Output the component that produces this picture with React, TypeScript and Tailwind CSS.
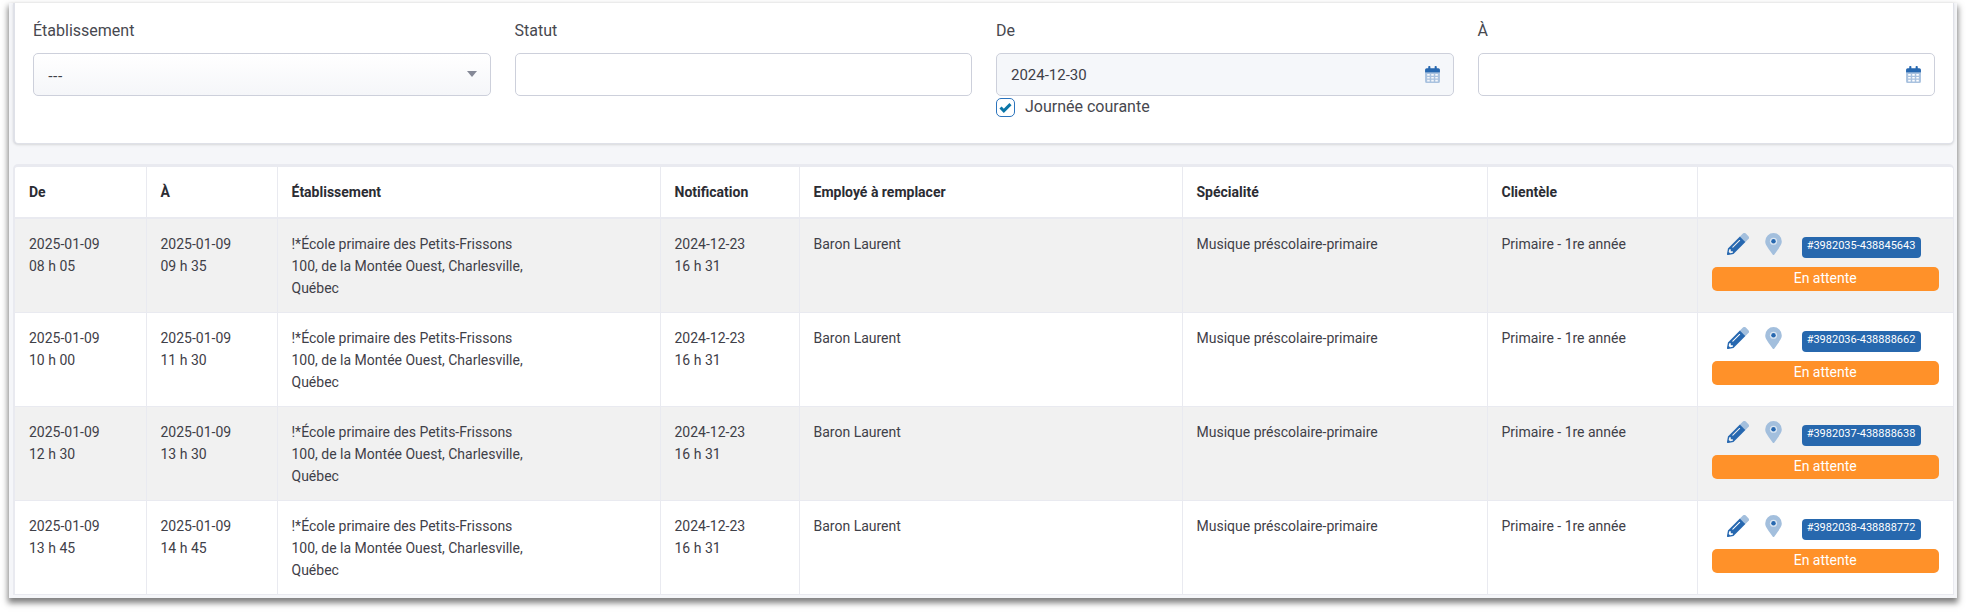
import { useState } from "react";

interface Replacement {
  id: string;
  date: string;
  from: string;
  to: string;
}

const replacements: Replacement[] = [
  { id: "3982035-438845643", date: "2025-01-09", from: "08 h 05", to: "09 h 35" },
  { id: "3982036-438888662", date: "2025-01-09", from: "10 h 00", to: "11 h 30" },
  { id: "3982037-438888638", date: "2025-01-09", from: "12 h 30", to: "13 h 30" },
  { id: "3982038-438888772", date: "2025-01-09", from: "13 h 45", to: "14 h 45" },
];

const columns = [
  { label: "De", width: "w-[131px]" },
  { label: "À", width: "w-[131px]" },
  { label: "Établissement", width: "" },
  { label: "Notification", width: "w-[139px]" },
  { label: "Employé à remplacer", width: "" },
  { label: "Spécialité", width: "w-[305px]" },
  { label: "Clientèle", width: "w-[210px]" },
  { label: "", width: "w-[256px]" },
];

const fieldClass =
  "block h-[43px] w-full rounded-[5px] border border-[#cdd0db] px-[14px] text-[15px] text-[#3f4048] outline-none";

const cellClass = "px-[14px] pt-[14px] pb-[13px]";

const CalendarIcon = () => (
  <svg viewBox="0 0 448 512" className="h-[17px] w-[15px]">
    <path
      fill="#a9c2df"
      fillRule="evenodd"
      d="M0 192h448v272a48 48 0 0 1-48 48H48a48 48 0 0 1-48-48zM64 240v52h76v-52zM186 240v52h76v-52zM308 240v52h76v-52zM64 328v52h76v-52zM186 328v52h76v-52zM308 328v52h76v-52zM64 416v48h76v-48zM186 416v48h76v-48zM308 416v48h76v-48z"
    />
    <path
      fill="#2768b0"
      d="M0 192v-80a48 48 0 0 1 48-48h48V24a24 24 0 0 1 24-24h16a24 24 0 0 1 24 24v40h128V24a24 24 0 0 1 24-24h16a24 24 0 0 1 24 24v40h48a48 48 0 0 1 48 48v80z"
    />
  </svg>
);

const PencilIcon = () => (
  <svg viewBox="0 0 512 512" className="size-[22px]">
    <path
      fill="#a3bfdd"
      d="M498 142l-70 70L300 84l70-70a48 48 0 0 1 68 0l60 60a48 48 0 0 1 0 68z"
    />
    <path
      fill="#2768b0"
      fillRule="evenodd"
      d="M300 84L22 362 0 484a24 24 0 0 0 28 28l122-22 278-278zM128 338a10 10 0 0 1 0-16l158-158a10 10 0 0 1 16 16L144 338a10 10 0 0 1-16 0zM88 424h48v36l-65 12-31-31 12-65h36z"
    />
  </svg>
);

const PinIcon = () => (
  <svg viewBox="0 0 384 512" className="h-[22px] w-[17px]">
    <path
      fill="#a3bfdd"
      d="M172 502C27 291 0 269 0 192a192 192 0 0 1 384 0c0 77-27 99-172 310a24 24 0 0 1-40 0z"
    />
    <circle cx="192" cy="192" r="84" fill="#dbe6f1" />
    <circle cx="192" cy="192" r="52" fill="#2768b0" />
  </svg>
);

const DateField = ({
  id,
  label,
  value,
  disabled = false,
}: {
  id: string;
  label: string;
  value: string;
  disabled?: boolean;
}) => (
  <div>
    <label htmlFor={id} className="mb-[10px] block">
      {label}
    </label>
    <div className="relative">
      <input
        id={id}
        type="text"
        defaultValue={value}
        disabled={disabled}
        className={`${fieldClass} ${disabled ? "bg-[#f5f7fa]" : "bg-white"}`}
      />
      <button
        type="button"
        aria-label="Calendrier"
        className="absolute inset-y-0 right-[14px] flex items-center"
      >
        <CalendarIcon />
      </button>
    </div>
  </div>
);

const Filters = () => {
  const [currentDay, setCurrentDay] = useState(true);

  return (
    <section className="rounded-b-[5px] border-r border-b border-l-2 border-[#dfe1e8] bg-white px-[18px] pt-4 pb-[25px] text-[16px] leading-6 text-[#47484f] shadow-sm">
      <div className="grid grid-cols-4 gap-6">
        <div>
          <label htmlFor="school" className="mb-[10px] block">
            Établissement
          </label>
          <div className="relative">
            <select
              id="school"
              className={`${fieldClass} appearance-none bg-linear-to-b from-white to-[#f5f6f9] font-['Noto_Sans',sans-serif]`}
            >
              <option>---</option>
            </select>
            <span className="pointer-events-none absolute top-[18px] right-[14px] border-x-5 border-t-6 border-x-transparent border-t-[#858997]" />
          </div>
        </div>
        <div>
          <label htmlFor="status" className="mb-[10px] block">
            Statut
          </label>
          <input id="status" type="text" className={`${fieldClass} bg-white`} />
        </div>
        <div>
          <DateField id="from" label="De" value="2024-12-30" disabled />
          <label className="flex items-center gap-[10px] leading-[22px]">
            <span className="relative flex">
              <input
                type="checkbox"
                checked={currentDay}
                onChange={(e) => setCurrentDay(e.target.checked)}
                className="size-[19px] appearance-none rounded-[5px] border border-[#2b74bd] bg-white"
              />
              {currentDay && (
                <svg
                  viewBox="0 0 19 19"
                  className="pointer-events-none absolute inset-0 size-[19px]"
                >
                  <path d="M4.5 9.5l3.3 3.3 6.7-6.7" fill="none" stroke="#0b76a8" strokeWidth="3" />
                </svg>
              )}
            </span>
            Journée courante
          </label>
        </div>
        <DateField id="to" label="À" value="" />
      </div>
    </section>
  );
};

const ReplacementRow = ({ row }: { row: Replacement }) => (
  <tr className="border-b border-[#e9eaf0] align-top odd:bg-[#f1f1f1]">
    <td className={cellClass}>
      {row.date}
      <br />
      {row.from}
    </td>
    <td className={cellClass}>
      {row.date}
      <br />
      {row.to}
    </td>
    <td className={cellClass}>
      <div className="max-w-[260px]">
        !*École primaire des Petits-Frissons
        <br />
        100, de la Montée Ouest, Charlesville, Québec
      </div>
    </td>
    <td className={cellClass}>
      2024-12-23
      <br />
      16 h 31
    </td>
    <td className={cellClass}>Baron Laurent</td>
    <td className={cellClass}>Musique préscolaire-primaire</td>
    <td className={cellClass}>Primaire - 1re année</td>
    <td className={cellClass}>
      <div className="flex items-start pl-[15px]">
        <button type="button" aria-label="Modifier">
          <PencilIcon />
        </button>
        <button type="button" aria-label="Localiser" className="ml-4">
          <PinIcon />
        </button>
        <span className="mt-1 ml-5 h-[21px] w-[119px] rounded-[4px] bg-[#2768ae] text-center text-[11px] leading-[17px] text-white">
          #{row.id}
        </span>
      </div>
      <div className="mt-[9px] h-6 rounded-[5px] bg-[#ff9129] text-center leading-[23px] text-white">
        En attente
      </div>
    </td>
  </tr>
);

const App = () => (
  <div className="bg-white px-[9px] pt-[3px] pb-[15px] font-[Roboto,sans-serif]">
    <main className="bg-[#f5f6f9] pr-[3px] pb-[3px] pl-1 shadow-[0_4px_6px_1px_rgba(0,0,0,0.5)]">
      <Filters />
      <section className="mt-5 overflow-hidden rounded-t-[5px] border-t-3 border-r border-l-2 border-[#e9eaf0]">
        <table className="w-full table-fixed border-collapse bg-white text-[14px] leading-[22px] text-[#3f4048] [&_td+td]:border-l [&_td+td]:border-[#e9eaf0] [&_th+th]:border-l [&_th+th]:border-[#e9eaf0]">
          <thead>
            <tr className="border-b-2 border-[#e9eaf0]">
              {columns.map((col, i) => (
                <th
                  key={i}
                  className={`${col.width} h-[51px] px-[14px] text-left font-bold text-[#2b2c33]`}
                >
                  {col.label}
                </th>
              ))}
            </tr>
          </thead>
          <tbody>
            {replacements.map((row) => (
              <ReplacementRow key={row.id} row={row} />
            ))}
          </tbody>
        </table>
      </section>
    </main>
  </div>
);

export default App;
